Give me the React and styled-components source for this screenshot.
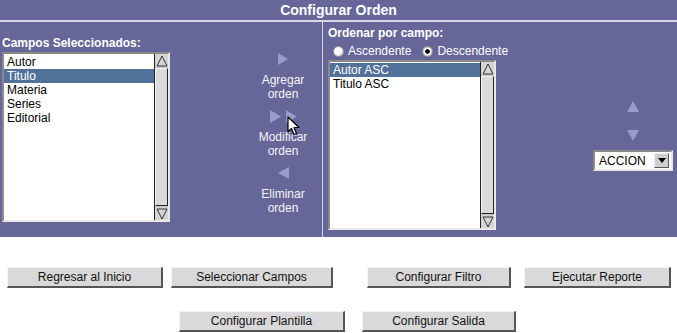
import React from "react";
import styled, { createGlobalStyle } from "styled-components";

const GlobalStyle = createGlobalStyle`
  html, body {
    margin: 0;
    padding: 0;
    background: #ffffff;
    font-family: "Liberation Sans", Arial, Helvetica, sans-serif;
    font-size: 12px;
  }
`;

const camposSeleccionados = ["Autor", "Titulo", "Materia", "Series", "Editorial"];
const ordenes = ["Autor ASC", "Titulo ASC"];

const Arrow = ({ dir = "right", w = 10, h = 12 }) => {
  const points = {
    right: `0,0 ${w},${h / 2} 0,${h}`,
    left: `${w},0 0,${h / 2} ${w},${h}`,
    up: `${w / 2},0 ${w},${h} 0,${h}`,
    down: `0,0 ${w},0 ${w / 2},${h}`
  }[dir];
  return (
    <svg width={w} height={h} viewBox={`0 0 ${w} ${h}`}>
      <polygon points={points} fill="#9a9acd" />
    </svg>
  );
};

const ListBox = ({ items, selected }) => (
  <List>
    <Items>
      {items.map((item, i) => (
        <Item key={item} $selected={i === selected}>
          {item}
        </Item>
      ))}
    </Items>
    <Scrollbar>
      <ScrollBtn>
        <svg width="12" height="12" viewBox="0 0 12 12">
          <polygon points="6,1 11,11 1,11" fill="none" stroke="#333" strokeWidth="1" />
        </svg>
      </ScrollBtn>
      <Thumb />
      <ScrollBtn>
        <svg width="12" height="12" viewBox="0 0 12 12">
          <polygon points="1,1 11,1 6,11" fill="none" stroke="#333" strokeWidth="1" />
        </svg>
      </ScrollBtn>
    </Scrollbar>
  </List>
);

export default function App() {
  return (
    <>
      <GlobalStyle />
      <Header>Configurar Orden</Header>
      <Panel>
        <LeftCol>
          <Label>Campos Seleccionados:</Label>
          <ListBox items={camposSeleccionados} selected={1} />
        </LeftCol>

        <MiddleCol>
          <Action>
            <ArrowRow>
              <Arrow dir="right" />
            </ArrowRow>
            <ActionLabel>
              Agregar
              <br />
              orden
            </ActionLabel>
          </Action>
          <Action>
            <ArrowRow $gap={5}>
              <Arrow dir="right" w={11} h={13} />
              <Arrow dir="right" w={11} h={13} />
              <Cursor width="13" height="20" viewBox="0 0 13 20">
                <polygon
                  points="1,1 1,16 4.5,12.5 7,18.5 9.5,17.5 7,11.5 12,11.5"
                  fill="#ffffff"
                  stroke="#000000"
                  strokeWidth="1.2"
                  strokeLinejoin="round"
                />
              </Cursor>
            </ArrowRow>
            <ActionLabel>
              Modificar
              <br />
              orden
            </ActionLabel>
          </Action>
          <Action>
            <ArrowRow>
              <Arrow dir="left" w={11} />
            </ArrowRow>
            <ActionLabel>
              Eliminar
              <br />
              orden
            </ActionLabel>
          </Action>
        </MiddleCol>

        <RightCol>
          <OrderCol>
            <Label>Ordenar por campo:</Label>
            <RadioRow>
              <RadioOption>
                <Radio />
                Ascendente
              </RadioOption>
              <RadioOption>
                <Radio $checked />
                Descendente
              </RadioOption>
            </RadioRow>
            <ListBox items={ordenes} selected={0} />
          </OrderCol>
          <SideCol>
            <Arrow dir="up" w={12} h={11} />
            <SideSpacer />
            <Arrow dir="down" w={12} h={11} />
            <Select>
              <SelectText>ACCION</SelectText>
              <SelectBtn>
                <svg width="8" height="5" viewBox="0 0 8 5">
                  <polygon points="0,0 8,0 4,5" fill="#000" />
                </svg>
              </SelectBtn>
            </Select>
          </SideCol>
        </RightCol>
      </Panel>

      <Buttons>
        <ButtonRow $top={30}>
          <Button $w={156} $ml={7}>Regresar al Inicio</Button>
          <Button $w={162} $ml={8}>Seleccionar Campos</Button>
          <Button $w={144} $ml={34}>Configurar Filtro</Button>
          <Button $w={147} $ml={13}>Ejecutar Reporte</Button>
        </ButtonRow>
        <ButtonRow $top={23}>
          <Button $w={166} $ml={179}>Configurar Plantilla</Button>
          <Button $w={154} $ml={17}>Configurar Salida</Button>
        </ButtonRow>
      </Buttons>
    </>
  );
}

const Header = styled.div`
  height: 20px;
  line-height: 20px;
  background: #666699;
  color: #ffffff;
  font-weight: bold;
  font-size: 14px;
  text-align: center;
  border-bottom: 2px solid #d6d6e8;
`;

const Panel = styled.div`
  display: flex;
  height: 215px;
  background: #666699;
  color: #ffffff;
  overflow: hidden;
`;

const LeftCol = styled.div`
  flex: 0 0 244px;
  padding: 14px 0 0 2px;
  box-sizing: border-box;
`;

const Label = styled.div`
  font-weight: bold;
  font-size: 12px;
  line-height: 14px;
  margin-bottom: 2px;
  white-space: nowrap;
`;

const List = styled.div`
  display: flex;
  width: 168px;
  height: 170px;
  box-sizing: border-box;
  background: #ffffff;
  border-style: solid;
  border-width: 2px;
  border-color: #8a8a8a #e8e8e8 #e8e8e8 #8a8a8a;
`;

const Items = styled.div`
  flex: 1;
  padding-top: 1px;
  color: #000000;
`;

const Item = styled.div`
  height: 14px;
  line-height: 14px;
  padding-left: 3px;
  font-size: 12px;
  background: ${(p) => (p.$selected ? "#51709a" : "transparent")};
  color: ${(p) => (p.$selected ? "#ffffff" : "#000000")};
`;

const Scrollbar = styled.div`
  width: 14px;
  display: flex;
  flex-direction: column;
  background: #c4c4c4;
  border-left: 1px solid #222;
  box-sizing: border-box;
`;

const ScrollBtn = styled.div`
  height: 13px;
  display: flex;
  align-items: center;
  justify-content: center;
  background: #d4d4d4;
`;

const Thumb = styled.div`
  flex: 1;
  margin: 1px 0;
  background: #dadada;
  border-style: solid;
  border-width: 1px;
  border-color: #f4f4f4 #222 #222 #f4f4f4;
`;

const MiddleCol = styled.div`
  flex: 0 0 78px;
  padding-top: 31px;
  display: flex;
  flex-direction: column;
  align-items: center;
`;

const Action = styled.div`
  display: flex;
  flex-direction: column;
  align-items: center;
  margin-bottom: 9px;
`;

const ArrowRow = styled.div`
  position: relative;
  display: flex;
  gap: ${(p) => p.$gap || 0}px;
  height: 13px;
  margin-bottom: 7px;
`;

const ActionLabel = styled.div`
  font-size: 12px;
  line-height: 14px;
  text-align: center;
  color: #f4f4f8;
`;

const Cursor = styled.svg`
  position: absolute;
  left: 17px;
  top: 6px;
`;

const RightCol = styled.div`
  flex: 1 1 auto;
  min-width: 0;
  display: flex;
  border-left: 1px solid #d6d6e8;
  padding: 4px 0 0 5px;
`;

const OrderCol = styled.div`
  flex: 0 0 168px;
  width: 168px;
  min-width: 0;
  display: flex;
  flex-direction: column;
`;

const RadioRow = styled.div`
  display: flex;
  gap: 11px;
  height: 16px;
  margin-top: 2px;
  line-height: 14px;
  padding-left: 5px;
  white-space: nowrap;
`;

const RadioOption = styled.label`
  display: flex;
  align-items: center;
  gap: 4px;
  height: 14px;
  font-size: 12px;
  color: #ffffff;
`;

const Radio = styled.span`
  width: 11px;
  height: 11px;
  border-radius: 50%;
  box-sizing: border-box;
  background: ${(p) =>
    p.$checked
      ? "radial-gradient(circle, #000 0 2px, #fff 2.5px 3.5px, #d0d0d0 4px)"
      : "radial-gradient(circle at 40% 40%, #ffffff 0 3px, #e0e0e0 5px)"};
  border: 1px solid #9a9a9a;
`;

const SideCol = styled.div`
  flex: 0 0 80px;
  margin-left: 97px;
  padding-top: 75px;
  display: flex;
  flex-direction: column;
  align-items: center;
`;

const SideSpacer = styled.div`
  height: 18px;
`;

const Select = styled.div`
  margin-top: 9px;
  width: 80px;
  height: 21px;
  box-sizing: border-box;
  display: flex;
  align-items: center;
  background: #ffffff;
  border-style: solid;
  border-width: 2px;
  border-color: #8a8a8a #e8e8e8 #e8e8e8 #8a8a8a;
`;

const SelectText = styled.div`
  flex: 1;
  padding-left: 4px;
  font-size: 12px;
  color: #000000;
`;

const SelectBtn = styled.div`
  width: 13px;
  height: 13px;
  margin-right: 2px;
  display: flex;
  align-items: center;
  justify-content: center;
  background: #cfcfcf;
  border-style: solid;
  border-width: 1px;
  border-color: #f2f2f2 #555 #555 #f2f2f2;
`;

const Buttons = styled.div`
  display: flex;
  flex-direction: column;
`;

const ButtonRow = styled.div`
  display: flex;
  margin-top: ${(p) => p.$top}px;
`;

const Button = styled.div`
  flex: 0 0 ${(p) => p.$w}px;
  margin-left: ${(p) => p.$ml}px;
  height: 21px;
  box-sizing: border-box;
  display: flex;
  align-items: center;
  justify-content: center;
  background: #d9d9d9;
  color: #111111;
  font-size: 12px;
  border-style: solid;
  border-width: 1px 2px 2px 1px;
  border-color: #f4f4f4 #555555 #555555 #f4f4f4;
`;
